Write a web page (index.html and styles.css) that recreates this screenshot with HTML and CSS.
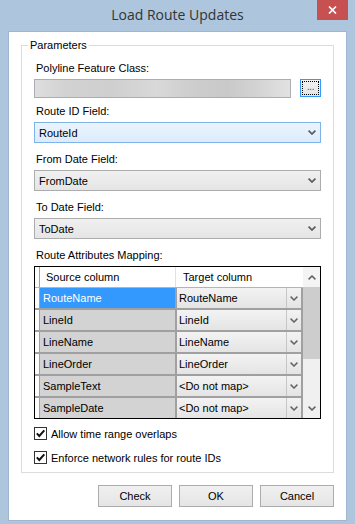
FILE: index.html
```html
<!DOCTYPE html>
<html>
<head>
<meta charset="utf-8">
<title>Load Route Updates</title>
<link rel="stylesheet" href="styles.css">
</head>
<body>
<div class="window">
  <div class="titlebar">
    <span></span>
    <div class="title">Load Route Updates</div>
    <div class="close"><svg width="9" height="8" viewBox="0 0 9 8"><path d="M1 0.5 L8 7.5 M8 0.5 L1 7.5" stroke="#fff" stroke-width="1.7"/></svg></div>
  </div>
  <div class="client">
    <fieldset class="group">
      <legend>Parameters</legend>
      <div class="label">Polyline Feature Class:</div>
      <div class="fc-row">
        <div class="textfield"></div>
        <div class="browse"><span class="focus">...</span></div>
      </div>

      <div class="label sp7">Route ID Field:</div>
      <div class="combo hot"><span>RouteId</span><svg class="chev" width="8" height="5" viewBox="0 0 8 5"><path d="M0.6 0.6 L4 4 L7.4 0.6" fill="none" stroke="#555" stroke-width="1.6"/></svg></div>

      <div class="label sp10">From Date Field:</div>
      <div class="combo"><span>FromDate</span><svg class="chev" width="8" height="5" viewBox="0 0 8 5"><path d="M0.6 0.6 L4 4 L7.4 0.6" fill="none" stroke="#555" stroke-width="1.6"/></svg></div>

      <div class="label sp10">To Date Field:</div>
      <div class="combo"><span>ToDate</span><svg class="chev" width="8" height="5" viewBox="0 0 8 5"><path d="M0.6 0.6 L4 4 L7.4 0.6" fill="none" stroke="#555" stroke-width="1.6"/></svg></div>

      <div class="label sp10">Route Attributes Mapping:</div>
      <div class="grid">
        <div class="grid-main">
          <div class="hrow">
            <div class="strip"></div>
            <div class="hsrc">Source column</div>
            <div class="htgt">Target column</div>
          </div>
          <div class="row sel">
            <div class="strip"></div>
            <div class="src">RouteName</div>
            <div class="tgt"><span class="tv">RouteName</span><span class="arr"><svg width="8" height="5" viewBox="0 0 8 5"><path d="M0.6 0.6 L4 4 L7.4 0.6" fill="none" stroke="#666" stroke-width="1.5"/></svg></span></div>
          </div>
          <div class="row">
            <div class="strip"></div>
            <div class="src">LineId</div>
            <div class="tgt"><span class="tv">LineId</span><span class="arr"><svg width="8" height="5" viewBox="0 0 8 5"><path d="M0.6 0.6 L4 4 L7.4 0.6" fill="none" stroke="#666" stroke-width="1.5"/></svg></span></div>
          </div>
          <div class="row">
            <div class="strip"></div>
            <div class="src">LineName</div>
            <div class="tgt"><span class="tv">LineName</span><span class="arr"><svg width="8" height="5" viewBox="0 0 8 5"><path d="M0.6 0.6 L4 4 L7.4 0.6" fill="none" stroke="#666" stroke-width="1.5"/></svg></span></div>
          </div>
          <div class="row">
            <div class="strip"></div>
            <div class="src">LineOrder</div>
            <div class="tgt"><span class="tv">LineOrder</span><span class="arr"><svg width="8" height="5" viewBox="0 0 8 5"><path d="M0.6 0.6 L4 4 L7.4 0.6" fill="none" stroke="#666" stroke-width="1.5"/></svg></span></div>
          </div>
          <div class="row">
            <div class="strip"></div>
            <div class="src">SampleText</div>
            <div class="tgt"><span class="tv">&lt;Do not map&gt;</span><span class="arr"><svg width="8" height="5" viewBox="0 0 8 5"><path d="M0.6 0.6 L4 4 L7.4 0.6" fill="none" stroke="#666" stroke-width="1.5"/></svg></span></div>
          </div>
          <div class="row">
            <div class="strip"></div>
            <div class="src">SampleDate</div>
            <div class="tgt"><span class="tv">&lt;Do not map&gt;</span><span class="arr"><svg width="8" height="5" viewBox="0 0 8 5"><path d="M0.6 0.6 L4 4 L7.4 0.6" fill="none" stroke="#666" stroke-width="1.5"/></svg></span></div>
          </div>
          <div class="row">
            <div class="strip"></div>
            <div class="src"></div>
            <div class="tgt"><span class="tv"></span><span class="arr"></span></div>
          </div>
        </div>
        <div class="vscroll">
          <div class="sb-up"><svg width="8" height="5" viewBox="0 0 8 5"><path d="M0.6 4.4 L4 1 L7.4 4.4" fill="none" stroke="#606060" stroke-width="1.5"/></svg></div>
          <div class="sb-thumb"></div>
          <div class="sb-track"></div>
          <div class="sb-down"><svg width="8" height="5" viewBox="0 0 8 5"><path d="M0.6 0.6 L4 4 L7.4 0.6" fill="none" stroke="#606060" stroke-width="1.5"/></svg></div>
        </div>
      </div>

      <div class="check first">
        <span class="box"><svg width="11" height="11" viewBox="0 0 11 11"><path d="M1.8 5.4 L4.3 8 L9.3 2.4" fill="none" stroke="#111" stroke-width="2"/></svg></span>
        <span>Allow time range overlaps</span>
      </div>
      <div class="check second">
        <span class="box"><svg width="11" height="11" viewBox="0 0 11 11"><path d="M1.8 5.4 L4.3 8 L9.3 2.4" fill="none" stroke="#111" stroke-width="2"/></svg></span>
        <span>Enforce network rules for route IDs</span>
      </div>
    </fieldset>

    <div class="buttons">
      <div class="btn">Check</div>
      <div class="btn">OK</div>
      <div class="btn">Cancel</div>
    </div>
  </div>
</div>
</body>
</html>
```

FILE: styles.css
```css
* { box-sizing: border-box; }
html, body { margin: 0; padding: 0; }
body {
  width: 355px;
  height: 524px;
  overflow: hidden;
  font-family: "Liberation Sans", Arial, sans-serif;
  font-size: 11px;
  color: #000;
}
.window {
  width: 355px;
  height: 524px;
  background: #adc6dd;
  display: flex;
  flex-direction: column;
}
.titlebar {
  flex: none;
  height: 31px;
  display: grid;
  grid-template-columns: 1fr auto 1fr;
  align-items: start;
}
.title {
  font-family: "Open Sans", "Noto Sans", sans-serif;
  font-size: 14px;
  line-height: 20px;
  padding-top: 5px;
  color: #333;
  white-space: nowrap;
}
.close {
  justify-self: end;
  margin-right: 7px;
  width: 31px;
  height: 20px;
  background: #c75050;
  display: flex;
  align-items: center;
  justify-content: center;
}
.client {
  flex: 1;
  margin: 0 8px 3px;
  background: #fff;
  border: 1px solid #9fb7ce;
  padding: 7px 12px 0;
}
.group {
  margin: 0;
  min-width: 0;
  border: 1px solid #dcdcdc;
  padding: 10px 12px 8px;
}
.group legend {
  padding: 0 2px;
  margin-left: -6px;
  line-height: 13px;
}
.label {
  line-height: 13px;
  padding-left: 2px;
  margin-bottom: 4px;
  white-space: nowrap;
}
.sp7 { margin-top: 7px; }
.sp10 { margin-top: 10px; }

.fc-row {
  display: flex;
  align-items: flex-start;
  gap: 9px;
}
.textfield {
  flex: 1;
  height: 19px;
  border: 1px solid #abadb3;
  background: linear-gradient(to right, #dedede 0%, #d2d2d2 12%, #cfcfcf 30%, #d9d9d9 48%, #cdcdcd 62%, #c9c9c9 75%, #d4d4d4 88%, #e2e2e2 100%);
}
.browse {
  width: 21px;
  height: 18px;
  border: 1px solid #3399ff;
  background: linear-gradient(#f2f2f2, #e4e4e4);
  padding: 1px;
  display: flex;
}
.browse .focus {
  flex: 1;
  border: 1px dotted #000;
  font-size: 10px;
  line-height: 10px;
  color: #6b3b8f;
  text-align: center;
  letter-spacing: -0.5px;
}

.combo {
  height: 21px;
  border: 1px solid #acacac;
  background: linear-gradient(#f0f0f0, #e5e5e5);
  display: flex;
  align-items: center;
  justify-content: space-between;
  padding: 0 4px 0 4px;
}
.combo.hot {
  border-color: #7eb4ea;
  background: linear-gradient(#ecf4fc, #dcecfc);
}
.chev { display: block; }

.grid {
  height: 153px;
  border: 1px solid #000;
  display: flex;
  background: #fff;
}
.grid-main {
  flex: 1;
  overflow: hidden;
}
.hrow {
  display: flex;
  height: 21px;
  border-bottom: 1px solid #b4b4b4;
  background: #fff;
}
.strip {
  flex: none;
  width: 5px;
  border-right: 1px solid #a0a0a0;
  background: #fff;
}
.hsrc {
  flex: none;
  width: 136px;
  border-right: 1px solid #e2e2e2;
  padding-left: 6px;
  line-height: 20px;
}
.htgt {
  flex: 1;
  padding-left: 7px;
  line-height: 20px;
}
.row {
  display: flex;
  height: 22px;
  border-bottom: 2px solid #a0a0a0;
}
.src {
  flex: none;
  width: 137px;
  border-right: 2px solid #a0a0a0;
  background: #d3d3d3;
  padding-left: 3px;
  line-height: 20px;
  white-space: nowrap;
}
.row.sel .src {
  background: #3399ff;
  color: #fff;
}
.tgt {
  flex: 1;
  display: flex;
  border-right: 2px solid #a0a0a0;
  background: linear-gradient(#f3f3f3, #e4e4e4);
}
.tv {
  flex: 1;
  padding-left: 2px;
  line-height: 20px;
  white-space: nowrap;
}
.arr {
  flex: none;
  width: 15px;
  border-left: 1px solid #c6c6c6;
  display: flex;
  align-items: center;
  justify-content: center;
}
.vscroll {
  flex: none;
  width: 17px;
  display: flex;
  flex-direction: column;
  background: #f0f0f0;
}
.sb-up {
  height: 20px;
  display: flex;
  align-items: center;
  justify-content: center;
  background: #f4f4f4;
}
.sb-thumb {
  height: 72px;
  background: #cdcdcd;
}
.sb-track { flex: 1; }
.sb-down {
  height: 19px;
  display: flex;
  align-items: center;
  justify-content: center;
}

.check {
  display: flex;
  align-items: center;
  gap: 4px;
  height: 13px;
  white-space: nowrap;
}
.check.first { margin-top: 8px; }
.check.second { margin-top: 11px; }
.box {
  width: 13px;
  height: 13px;
  border: 1px solid #333;
  background: #fff;
  display: flex;
}

.buttons {
  display: flex;
  justify-content: flex-end;
  gap: 7px;
  margin-top: 12px;
}
.btn {
  width: 74px;
  height: 22px;
  border: 1px solid #acacac;
  background: linear-gradient(#f0f0f0, #e5e5e5);
  text-align: center;
  line-height: 20px;
}
```
